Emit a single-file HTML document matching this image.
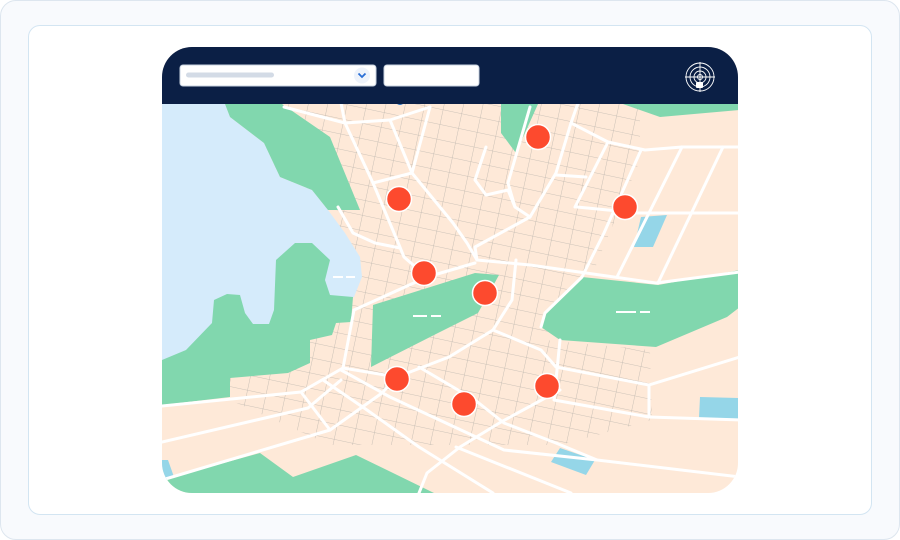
<!DOCTYPE html>
<html><head><meta charset="utf-8"><style>
html,body{margin:0;padding:0;width:900px;height:540px;overflow:hidden;background:#fff;font-family:"Liberation Sans",sans-serif}
.outer{position:absolute;left:0;top:0;width:898px;height:538px;border:1px solid #dde6ef;border-radius:16px;background:#f8fafd}
.card{position:absolute;left:28px;top:25px;width:842px;height:488px;border:1.5px solid #d3e5f2;border-radius:12px;background:#fff}
</style></head><body>
<div class="outer"></div>
<div class="card"></div>
<svg width="900" height="540" style="position:absolute;left:0;top:0">
<defs>
<clipPath id="mc"><rect x="162" y="47" width="576" height="446" rx="30"/></clipPath>
<clipPath id="gc"><polygon points="270,104 640,104 640,160 590,280 545,340 650,350 652,420 560,445 330,445 230,400 230,370"/></clipPath>
<pattern id="gp" width="19" height="15" patternUnits="userSpaceOnUse" patternTransform="rotate(12)">
<path d="M0 0H19M0 0V15" stroke="#bdb6ae" stroke-width="0.8" fill="none"/></pattern>
</defs>
<g clip-path="url(#mc)">
<rect x="162" y="47" width="576" height="446" fill="#fee9d8"/>
<rect x="162" y="47" width="576" height="446" fill="url(#gp)" clip-path="url(#gc)"/>
<polygon fill="#d5ebfb" points="162,104 225,104 230,117 264,143 280,177 312,190 328,210 345,233 360,257 362,277 354,297 162,380"/>
<g fill="#81d7ae">
<polygon points="225,104 282,104 330,137 360,210 328,210 312,190 280,177 264,143 230,117"/>
<polygon points="162,360 186,350 212,323 214,300 227,294 240,295 245,313 253,324 269,324 274,310 276,260 295,243 312,243 330,260 325,280 330,295 353,297 351,322 336,323 332,335 310,340 310,363 288,373 230,378 230,397 162,405"/>
<polygon points="373,305 475,273 499,275 478,313 438,333 371,367"/>
<polygon points="582,277 658,285 740,270 740,307 727,317 656,347 560,340 541,327 547,310"/>
<polygon points="501,104 538,104 516,153 501,133"/>
<polygon points="623,104 740,104 740,110 660,117"/>
<polygon points="162,480 260,453 293,477 356,455 434,493 162,493"/>
</g>
<g fill="#95d6e8">
<polygon points="641,217 667,215 653,247 634,247"/>
<polygon points="700,397 740,398 740,420 699,418"/>
<polygon points="560,448 595,460 586,475 551,462"/>
<polygon points="162,460 168,460 174,477 162,480"/>
</g>
<g fill="none" stroke="#fff" stroke-width="3" stroke-linejoin="round" stroke-linecap="round">
<polyline points="284,107 345,123 390,120 430,107"/>
<polyline points="341,103 345,123 373,183 397,240 404,257 427,277"/>
<polyline points="390,120 412,173 453,223 467,243 477,260"/>
<polyline points="430,107 412,173"/>
<polyline points="338,207 353,233 375,243 400,248"/>
<polyline points="373,183 412,173"/>
<polyline points="486,147 475,180 486,195 508,190 515,207 530,217"/>
<polyline points="578,103 571,123 556,173 530,217 475,247 477,260"/>
<polyline points="530,107 508,183 515,207"/>
<polyline points="571,123 608,142 645,150 682,147 740,147"/>
<polyline points="556,175 586,177"/>
<polyline points="577,207 638,213 740,213"/>
<polyline points="608,142 575,207"/>
<polyline points="641,150 604,233 582,277 545,313 541,327"/>
<polyline points="682,147 617,277"/>
<polyline points="723,147 658,283"/>
<polyline points="477,260 530,265 586,273 656,283 740,272"/>
<polyline points="354,310 427,277 475,263"/>
<polyline points="354,310 343,368"/>
<polyline points="516,260 512,300 493,330 449,357 397,377 343,368"/>
<polyline points="493,330 541,350 556,367 649,385 740,357"/>
<polyline points="560,340 554,400 649,417 740,420"/>
<polyline points="649,385 649,417"/>
<polyline points="162,406 301,392 343,368"/>
<polyline points="162,442 308,408 341,380"/>
<polyline points="162,480 330,430 382,393 397,377"/>
<polyline points="301,392 330,430"/>
<polyline points="323,380 367,410 419,447 493,493"/>
<polyline points="341,370 390,397 504,450 597,460 740,477"/>
<polyline points="419,367 475,400 504,423 556,443 597,460"/>
<polyline points="560,390 501,422 460,447 427,473 419,493"/>
<polyline points="456,447 571,493"/>
</g>
<g stroke="#fff" stroke-width="2">
<path d="M333 277h10M346 277h9M413 316h14M431 316h10M616 312h20M640 312h10"/>
</g>
<g fill="#fd4a2e" stroke="#fff" stroke-width="1.5">
<circle cx="399" cy="199" r="12.5"/><circle cx="538" cy="137" r="12.5"/><circle cx="625" cy="207" r="12.5"/>
<circle cx="424" cy="273" r="12.5"/><circle cx="485" cy="293" r="12.5"/><circle cx="397" cy="379" r="12.5"/>
<circle cx="464" cy="404" r="12.5"/><circle cx="547" cy="386" r="12.5"/>
</g>
<circle cx="400" cy="100" r="5" fill="#1a6bc4"/>
<rect x="162" y="47" width="576" height="57" fill="#0b1f45"/>
</g>
<rect x="180" y="65" width="196" height="21" rx="3" fill="#fff" stroke="#c9d3e0"/>
<rect x="186" y="72.5" width="88" height="5" rx="2.5" fill="#d3dbe6"/>
<circle cx="362" cy="75.5" r="8" fill="#eef3fb"/>
<path d="M358.5 73.5l3.5 3.5 3.5-3.5" fill="none" stroke="#2a6fd6" stroke-width="1.8"/>
<rect x="384" y="65" width="95" height="21" rx="3" fill="#fff" stroke="#c9d3e0"/>
<g fill="none" stroke="#fff" stroke-width="0.9">
<circle cx="700" cy="77" r="14"/><circle cx="700" cy="77" r="10"/><circle cx="700" cy="77" r="6"/><circle cx="700" cy="77" r="2.5"/>
<path d="M685 77h30M700 62v30"/>
</g>
<rect x="696" y="82" width="7" height="6" rx="1" fill="#fff"/>
</svg>
</body></html>
